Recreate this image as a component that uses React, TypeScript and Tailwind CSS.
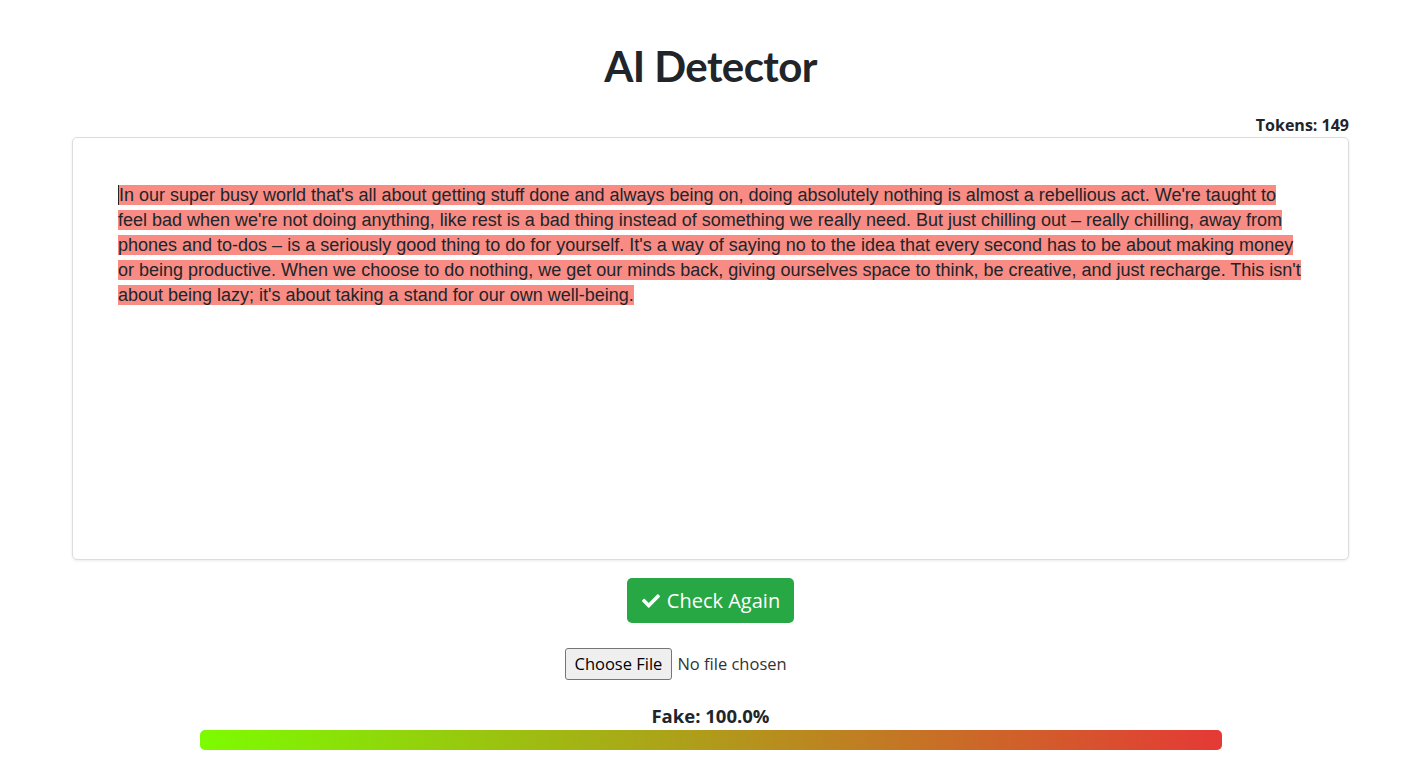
import React from "react";

const TEXT =
  "In our super busy world that's all about getting stuff done and always being on, doing absolutely nothing is almost a rebellious act. We're taught to feel bad when we're not doing anything, like rest is a bad thing instead of something we really need. But just chilling out \u2013 really chilling, away from phones and to-dos \u2013 is a seriously good thing to do for yourself. It's a way of saying no to the idea that every second has to be about making money or being productive. When we choose to do nothing, we get our minds back, giving ourselves space to think, be creative, and just recharge. This isn't about being lazy; it's about taking a stand for our own well-being.";

export default function App() {
  return (
    <div className="min-h-[765px] bg-white text-[#212529] font-['Open_Sans',sans-serif]">
      <div className="pl-[72px] pr-[66px] pt-[40px]">
        <h1 className="text-center font-['Lato',sans-serif] font-bold text-[42px] leading-[52px] tracking-[-0.6px] text-[#212529]">
          AI Detector
        </h1>
        <div className="mt-[22px] flex justify-end">
          <span className="font-bold text-[16px] leading-[23px]">Tokens: 149</span>
        </div>
        <div className="h-[423px] rounded-[5px] border border-[#dcdcdc] shadow-[0_1px_3px_rgba(0,0,0,0.08)] pl-[45px] pr-[46px] pt-[45px]">
          <p className="font-['Liberation_Sans',Arial,sans-serif] text-[18px] leading-[25px] text-[#212529]">
            <span className="bg-[#f88c85] border-l border-[#212529]">{TEXT}</span>
          </p>
        </div>
        <div className="mt-[18px] flex justify-center">
          <button className="flex items-center gap-[6px] h-[45px] px-[14px] rounded-[5px] bg-[#28a745] text-white text-[20px]">
            <svg width="20" height="18" viewBox="0 0 512 512" fill="white">
              <path d="M173.9 439.4l-166.4-166.4c-10-10-10-26.2 0-36.2l36.2-36.2c10-10 26.2-10 36.2 0L192 312.7 432.1 72.6c10-10 26.2-10 36.2 0l36.2 36.2c10 10 10 26.2 0 36.2L210.1 439.4c-10 10-26.2 10-36.2 0z" />
            </svg>
            <span>Check Again</span>
          </button>
        </div>
        <div className="mt-[25px] flex justify-center">
          <div className="w-[292px] flex items-center gap-[5px] text-[16.5px]">
            <span className="h-[32px] px-[9px] flex items-center border border-[#767676] rounded-[3px] bg-[#efefef] text-black">
              Choose File
            </span>
            <span className="text-[#333]">No file chosen</span>
          </div>
        </div>
        <div className="mt-[24px] text-center font-bold text-[18.5px] leading-[24px]">Fake: 100.0%</div>
        <div className="mt-[2px] mx-auto w-[1022px] h-[20px] rounded-[5px] bg-[linear-gradient(to_right,#7cfc00,#e53935)]" />
      </div>
    </div>
  );
}
